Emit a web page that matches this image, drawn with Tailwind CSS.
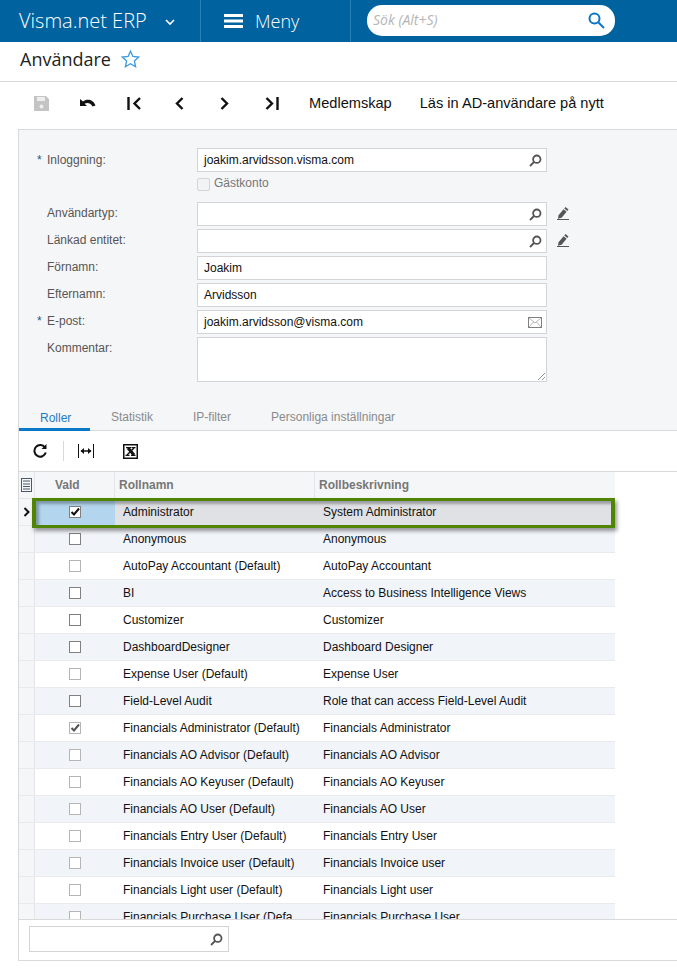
<!DOCTYPE html>
<html lang="sv">
<head>
    <meta charset="UTF-8">
    <title>Användare</title>
    <script src="https://cdn.jsdelivr.net/npm/@tailwindcss/browser@4"></script>
</head>
<body class="bg-white h-[978px] overflow-hidden font-['Liberation_Sans',sans-serif] text-xs text-black">
    <!-- top bar -->
    <header class="h-[42px] bg-[#0063a0] flex text-white font-['Open_Sans',sans-serif] font-light">
        <div class="w-[201px] pl-[19px] flex items-center border-r border-[#2b80b4] text-[20px]">
            <span>Visma.net ERP</span>
            <svg class="ml-[18px] mt-[2px]" width="10" height="7" viewBox="0 0 10 7" fill="none" stroke="#fff" stroke-width="1.6"><path d="M1 1l4 4 4-4"/></svg>
        </div>
        <div class="w-[150px] pl-[23px] flex items-center border-r border-[#2b80b4] text-[18px]">
            <svg width="19" height="14" viewBox="0 0 19 14" fill="#fff"><rect width="19" height="3"/><rect y="5.500" width="19" height="3"/><rect y="11" width="19" height="3"/></svg>
            <span class="ml-[12px]">Meny</span>
        </div>
        <div class="ml-4 mt-[5px] w-[248px] h-[31px] bg-white rounded-[15px] flex items-center justify-between pl-[6px] pr-[10px]">
            <span class="italic text-[14px] text-[#b5b5b5] font-normal">Sök (Alt+S)</span>
            <svg width="17" height="17" viewBox="0 0 17 17" fill="none" stroke="#0b75c4" stroke-width="2"><circle cx="6.500" cy="6.500" r="5"/><path d="M10.500 10.500l5.500 5.500"/></svg>
        </div>
    </header>

    <!-- title -->
    <div class="h-10 flex items-center pl-5 pb-[5px] border-b border-[#d9d9d9] font-['Open_Sans',sans-serif] text-[18px] text-[#222]">
        <span>Användare</span>
        <svg class="ml-[10px]" width="19" height="18" viewBox="0 0 19 18" fill="none" stroke="#3a9ae0" stroke-width="1.300"><path d="M9.500 1.200l2.400 5.300 5.800.6-4.300 3.900 1.200 5.700-5.100-2.900-5.100 2.900 1.200-5.700L1.300 7.100l5.800-.6z"/></svg>
    </div>

    <!-- main toolbar -->
    <div class="h-[47px] flex items-center pb-[4px] text-[14.6px] text-[#111]">
        <svg class="ml-[34px]" width="15" height="15" viewBox="0 0 15 15" fill="#c4c4c4"><path d="M0 0h12l3 3v12H0z"/><rect x="3" y="1" width="8" height="4" fill="#eee"/><circle cx="7.500" cy="10.500" r="2" fill="#eee"/></svg>
        <svg class="ml-[31px]" width="16" height="11" viewBox="0 0 16 11" fill="#111"><path d="M0 1v7h7L4.600 5.700c2.400-1.500 6-1 8 2.800L15.500 7.500C13.500 1.500 7 0 3 3.500z"/></svg>
        <svg class="ml-[31px]" width="15" height="13" viewBox="0 0 15 13" fill="none" stroke="#111" stroke-width="2.400"><path d="M1.500 0v13"/><path d="M13 1L7.500 6.500l5.500 5.500"/></svg>
        <svg class="ml-[32px]" width="10" height="13" viewBox="0 0 10 13" fill="none" stroke="#111" stroke-width="2.400"><path d="M8.500 1L3 6.500l5.500 5.500"/></svg>
        <svg class="ml-[36px]" width="10" height="13" viewBox="0 0 10 13" fill="none" stroke="#111" stroke-width="2.400"><path d="M1.500 1L7 6.500 1.500 12"/></svg>
        <svg class="ml-[35px]" width="14" height="13" viewBox="0 0 14 13" fill="none" stroke="#111" stroke-width="2.400"><path d="M1.500 1L7 6.500 1.500 12"/><path d="M12.500 0v13"/></svg>
        <span class="ml-[30px]">Medlemskap</span>
        <span class="ml-[28px]">Läs in AD-användare på nytt</span>
    </div>

    <!-- form + grid panel -->
    <div class="ml-[18px] h-[832px] border-t border-l border-b border-[#d9d9d9] flex flex-col">
        <div class="h-[265px] bg-[#f5f6f8] pl-[28px] pt-[18px] text-[#555] shrink-0">
            <div class="flex">
                <label class="w-[150px] pt-[4px] relative"><span class="absolute -left-[10px] text-[#1a5a8a]">*</span>Inloggning:</label>
                <div class="w-[350px] h-6 bg-white border border-[#d2d4d7] flex items-center justify-between pl-[6px] pr-[4px] text-[#111]">
                    <span>joakim.arvidsson.visma.com</span>
                    <svg width="13" height="13" viewBox="0 0 13 13" fill="none" stroke="#555" stroke-width="1.800"><circle cx="7.800" cy="5.200" r="3.700"/><path d="M5 8l-4 4"/></svg>
                </div>
            </div>
            <div class="ml-[150px] mt-[5px] h-[25px] flex items-start">
                <span class="mt-[1px] w-[13px] h-[13px] border border-[#d2d4d7] rounded-[2px] bg-[#f2f3f4]"></span>
                <span class="ml-[4px] -mt-[2px] text-[#777]">Gästkonto</span>
            </div>
            <div class="flex flex-col gap-[3px]">
                <div class="flex">
                    <label class="w-[150px] pt-[3px]">Användartyp:</label>
                    <div class="w-[350px] h-6 bg-white border border-[#d2d4d7] flex items-center justify-end pr-[4px]">
                        <svg width="13" height="13" viewBox="0 0 13 13" fill="none" stroke="#555" stroke-width="1.800"><circle cx="7.800" cy="5.200" r="3.700"/><path d="M5 8l-4 4"/></svg>
                    </div>
                    <svg class="ml-[10px] mt-[5px]" width="12" height="13" viewBox="0 0 12 13" fill="#555"><path d="M8.500 0l3 2.500-1.200 1.500-3-2.500zM6.600 2.300l3 2.500-5 6-3.600 1L1.500 8.200z"/><rect x="0" y="12" width="12" height="1"/></svg>
                </div>
                <div class="flex">
                    <label class="w-[150px] pt-[3px]">Länkad entitet:</label>
                    <div class="w-[350px] h-6 bg-white border border-[#d2d4d7] flex items-center justify-end pr-[4px]">
                        <svg width="13" height="13" viewBox="0 0 13 13" fill="none" stroke="#555" stroke-width="1.800"><circle cx="7.800" cy="5.200" r="3.700"/><path d="M5 8l-4 4"/></svg>
                    </div>
                    <svg class="ml-[10px] mt-[5px]" width="12" height="13" viewBox="0 0 12 13" fill="#555"><path d="M8.500 0l3 2.500-1.200 1.500-3-2.500zM6.600 2.300l3 2.500-5 6-3.600 1L1.500 8.200z"/><rect x="0" y="12" width="12" height="1"/></svg>
                </div>
                <div class="flex">
                    <label class="w-[150px] pt-[3px]">Förnamn:</label>
                    <div class="w-[350px] h-6 bg-white border border-[#d2d4d7] flex items-center pl-[6px] text-[#111]">Joakim</div>
                </div>
                <div class="flex">
                    <label class="w-[150px] pt-[3px]">Efternamn:</label>
                    <div class="w-[350px] h-6 bg-white border border-[#d2d4d7] flex items-center pl-[6px] text-[#111]">Arvidsson</div>
                </div>
                <div class="flex">
                    <label class="w-[150px] pt-[3px] relative"><span class="absolute -left-[10px] text-[#1a5a8a]">*</span>E-post:</label>
                    <div class="w-[350px] h-6 bg-white border border-[#d2d4d7] flex items-center justify-between pl-[6px] pr-[4px] text-[#111]">
                        <span>joakim.arvidsson@visma.com</span>
                        <svg width="14" height="11" viewBox="0 0 14 11" fill="none" stroke="#808080"><rect x=".5" y=".5" width="13" height="10"/><path d="M.5.500L7 6l6.500-5.500M.5 10.500L5.500 5M13.500 10.500L8.500 5" stroke-width=".6"/></svg>
                    </div>
                </div>
                <div class="flex">
                    <label class="w-[150px] pt-[3px]">Kommentar:</label>
                    <div class="w-[350px] h-[45px] bg-white border border-[#d2d4d7] flex items-end justify-end">
                        <svg width="9" height="9" viewBox="0 0 9 9" fill="none" stroke="#777" stroke-width=".8"><path d="M1 8l7-7M5 8l3-3"/></svg>
                    </div>
                </div>
            </div>
        </div>

        <!-- tabs -->
        <div class="h-[36px] bg-[#f5f6f8] border-b border-[#d9d9d9] flex items-end text-[#8a8a8a] shrink-0">
            <div class="w-[71px] h-[21px] pl-[21px] text-[#1f7bc6] border-b-[3px] border-[#0a78c8] -mb-[1px]">Roller</div>
            <div class="h-[21px] ml-[21px]">Statistik</div>
            <div class="h-[21px] ml-[40px]">IP-filter</div>
            <div class="h-[21px] ml-[40px]">Personliga inställningar</div>
        </div>

        <!-- grid toolbar -->
        <div class="h-[41px] border-b border-[#d9d9d9] flex items-center shrink-0">
            <svg class="ml-[14px]" width="14" height="14" viewBox="0 0 14 14" fill="none" stroke="#111" stroke-width="2"><path d="M12 3.500A5.800 5.800 0 1 0 12.800 8.500"/><path d="M13.500 0v5h-5z" fill="#111" stroke="none"/></svg>
            <span class="ml-[16px] w-px h-5 bg-[#d9d9d9]"></span>
            <svg class="ml-[14px]" width="16" height="14" viewBox="0 0 16 14" fill="none" stroke="#111"><path d="M.5 0v14M15.500 0v14"/><path d="M3 7h10" stroke-width="1.500"/><path d="M6 4v6L2.500 7zM10 4v6l3.500-3z" fill="#111" stroke="none"/></svg>
            <svg class="ml-[29px]" width="15" height="15" viewBox="0 0 15 15" fill="none"><rect x=".75" y=".75" width="13.500" height="13.500" stroke="#111" stroke-width="1.500"/><path d="M5 4l6 7" stroke="#111" stroke-width="3"/><path d="M11 4l-7 7" stroke="#111" stroke-width="1.500"/><path d="M3 3.700h5M8.500 3.700h4M2.500 11.300h4M8 11.300h4.500" stroke="#111" stroke-width="1.200"/></svg>
        </div>

        <!-- grid -->
        <div class="flex-1 overflow-hidden relative text-[#111]">
            <div class="flex w-[596px] h-[27px] bg-[#f5f6f8] border-b border-[#e3e5e8] font-bold text-[#777]">
                <div class="w-[16px] flex items-center justify-center border-r border-[#e3e5e8]">
                    <svg width="11" height="14" viewBox="0 0 11 14" fill="none" stroke="#4a5a6a"><rect x=".5" y=".5" width="10" height="13"/><path d="M2 3h7M2 6h7M2 8.500h7M2 11h7"/></svg>
                </div>
                <div class="w-[80px] pl-[20px] flex items-center border-r border-[#e3e5e8]">Vald</div>
                <div class="w-[200px] pl-[4px] flex items-center border-r border-[#e3e5e8]">Rollnamn</div>
                <div class="flex-1 pl-[4px] flex items-center">Rollbeskrivning</div>
            </div>
            <div id="rows"></div>
        </div>

        <!-- footer -->
        <div class="h-[41px] border-t border-[#d9d9d9] flex items-center pl-[10px] pb-[2px] shrink-0">
            <div class="w-[200px] h-[26px] border border-[#d2d4d7] flex items-center justify-end pr-[5px]">
                <svg width="13" height="13" viewBox="0 0 13 13" fill="none" stroke="#555" stroke-width="1.800"><circle cx="7.800" cy="5.200" r="3.700"/><path d="M5 8l-4 4"/></svg>
            </div>
        </div>
    </div>

    <script>
        const roles = [
            ['Administrator', 'System Administrator', 1, 1],
            ['Anonymous', 'Anonymous', 0, 1],
            ['AutoPay Accountant (Default)', 'AutoPay Accountant', 0, 0],
            ['BI', 'Access to Business Intelligence Views', 0, 1],
            ['Customizer', 'Customizer', 0, 1],
            ['DashboardDesigner', 'Dashboard Designer', 0, 1],
            ['Expense User (Default)', 'Expense User', 0, 0],
            ['Field-Level Audit', 'Role that can access Field-Level Audit', 0, 1],
            ['Financials Administrator (Default)', 'Financials Administrator', 1, 0],
            ['Financials AO Advisor (Default)', 'Financials AO Advisor', 0, 0],
            ['Financials AO Keyuser (Default)', 'Financials AO Keyuser', 0, 0],
            ['Financials AO User (Default)', 'Financials AO User', 0, 0],
            ['Financials Entry User (Default)', 'Financials Entry User', 0, 0],
            ['Financials Invoice user (Default)', 'Financials Invoice user', 0, 0],
            ['Financials Light user (Default)', 'Financials Light user', 0, 0],
            ['Financials Purchase User (Defa', 'Financials Purchase User', 0, 0]
        ];

        document.getElementById('rows').innerHTML = roles.map((r, i) => {
            const first = i === 0;
            const rowBg = first ? 'bg-[#dfe1e5]' : (i % 2 ? 'bg-[#f1f4f9]' : 'bg-white');
            const box = r[3] ? 'border-[#808080]' : 'border-[#b5b5b5]';
            const tick = r[2] ? `<svg class="absolute left-0 top-0" width="10" height="10" viewBox="0 0 10 10" fill="none" stroke="${r[3] ? '#111' : '#555'}" stroke-width="2"><path d="M1.500 5l2.500 2.500 5-6"/></svg>` : '';
            const overlay = first ? '<div class="absolute z-10 -left-[3px] -top-[1px] w-[583px] h-[30px] border-x-4 border-y-[3px] border-[#4f8500] shadow-[2px_3px_4px_rgba(0,0,0,0.4),inset_3px_3px_3px_rgba(0,0,0,0.3)]"></div>' : '';
            const arrow = first ? '<svg width="7" height="10" viewBox="0 0 7 10" fill="none" stroke="#111" stroke-width="2"><path d="M1.500 1l4 4-4 4"/></svg>' : '';
            return `<div class="flex w-[596px] h-[27px] border-b border-[#e8eaee]">
                <div class="w-[16px] bg-[#f5f6f8] border-r border-[#e3e5e8] flex items-center justify-center">${arrow}</div>
                <div class="relative flex flex-1 ${rowBg}">
                    ${overlay}
                    <div class="w-[80px] flex items-center justify-center ${first ? 'bg-[#b3d5ee]' : ''}">
                        <span class="relative w-[12px] h-[12px] border bg-white ${box}">${tick}</span>
                    </div>
                    <div class="w-[200px] pl-[8px] flex items-center whitespace-nowrap overflow-hidden">${r[0]}</div>
                    <div class="flex-1 pl-[8px] flex items-center whitespace-nowrap">${r[1]}</div>
                </div>
            </div>`;
        }).join('');
    </script>
</body>
</html>
